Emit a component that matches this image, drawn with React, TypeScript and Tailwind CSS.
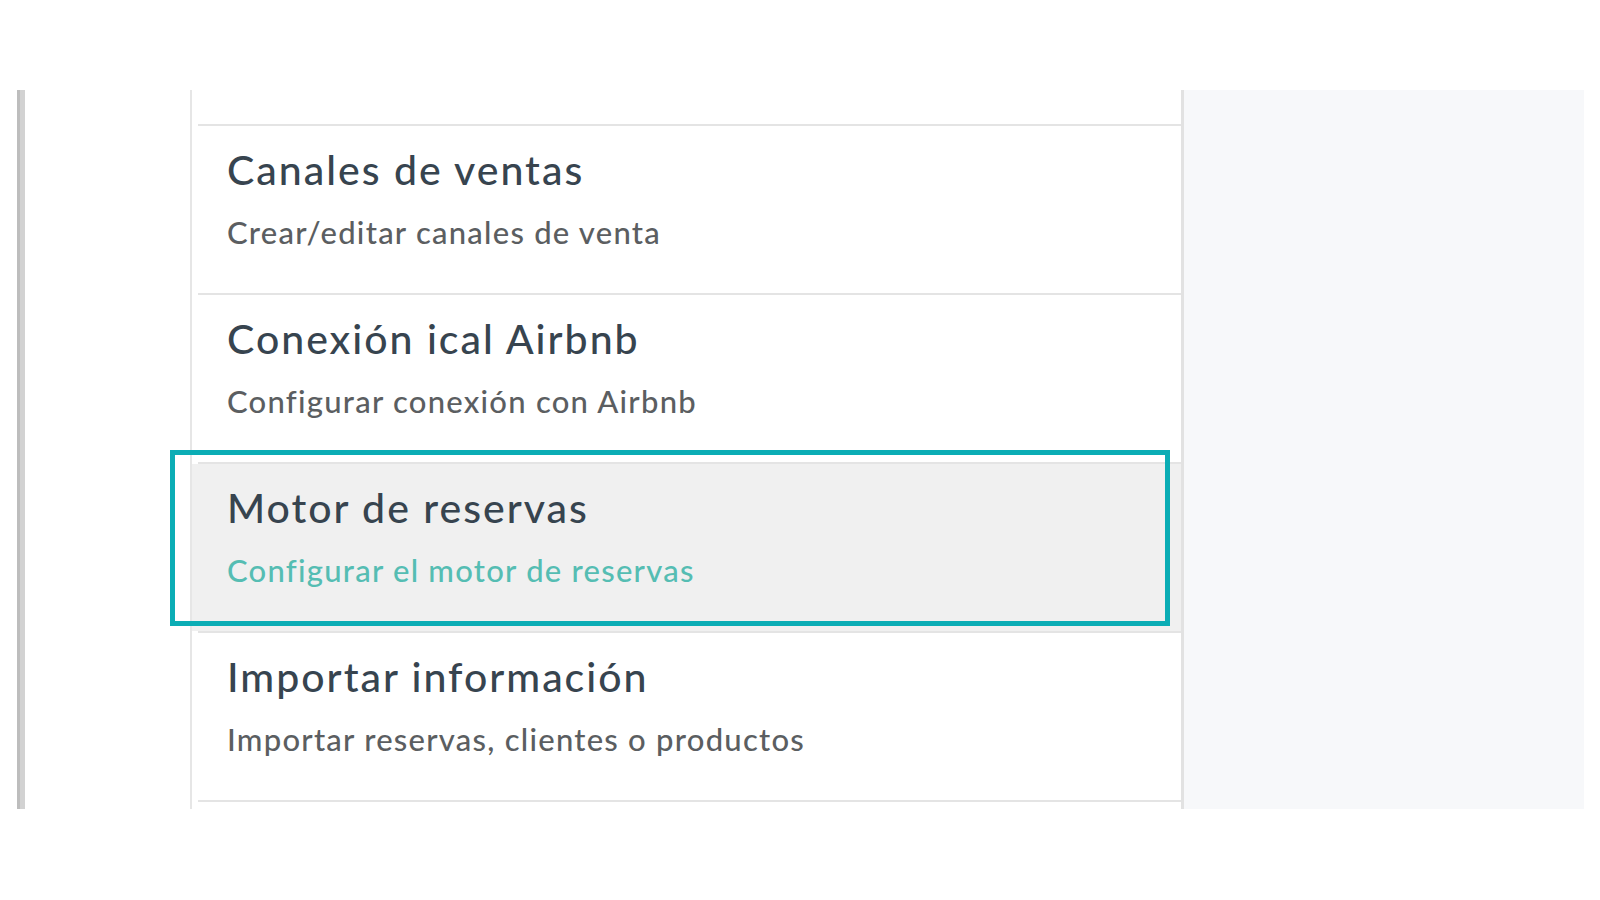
import React from "react";

const rows = [
  { title: "Canales de ventas", sub: "Crear/editar canales de venta", active: false },
  { title: "Conexión ical Airbnb", sub: "Configurar conexión con Airbnb", active: false },
  { title: "Motor de reservas", sub: "Configurar el motor de reservas", active: true },
  { title: "Importar información", sub: "Importar reservas, clientes o productos", active: false },
];

function Sep() {
  return <div className="h-[2px] ml-[6px] bg-[#e4e4e4]" />;
}

export default function App() {
  return (
    <div
      className="relative w-[1600px] h-[900px] bg-white overflow-hidden"
      style={{ fontFamily: "Lato, 'Open Sans', sans-serif" }}
    >
      <div className="flex h-[719px] mt-[90px]">
        <div className="w-[17px]" />
        <div className="w-[8px] flex">
          <div className="w-[3px] bg-[#bdbdbd]" />
          <div className="w-[5px] bg-[#d2d2d2]" />
        </div>
        <div className="w-[165px]" />
        <div className="w-[991px] border-l-2 border-[#e6e6e6] flex flex-col overflow-hidden">
          <div className="h-[34px] shrink-0" />
          <Sep />
          {rows.map((r) => (
            <React.Fragment key={r.title}>
              <div
                className={
                  "h-[167px] shrink-0 pl-[35px] pt-[20px] " + (r.active ? "bg-[#f0f0f0]" : "")
                }
              >
                <div className="text-[41px] leading-[48px] tracking-[2px] text-[#37444f] font-medium">
                  {r.title}
                </div>
                <div
                  className={
                    "mt-[20px] text-[31px] leading-[36px] tracking-[1.25px] font-medium " +
                    (r.active ? "text-[#55bdb3]" : "text-[#5b5e61]")
                  }
                >
                  {r.sub}
                </div>
              </div>
              <Sep />
            </React.Fragment>
          ))}
        </div>
        <div className="w-[403px] border-l-[3px] border-[#e2e2e2] bg-[#f7f8fa]" />
      </div>
      <div className="absolute left-[170px] top-[450px] w-[1000px] h-[176px] border-[5px] border-[#0badb5]" />
    </div>
  );
}
